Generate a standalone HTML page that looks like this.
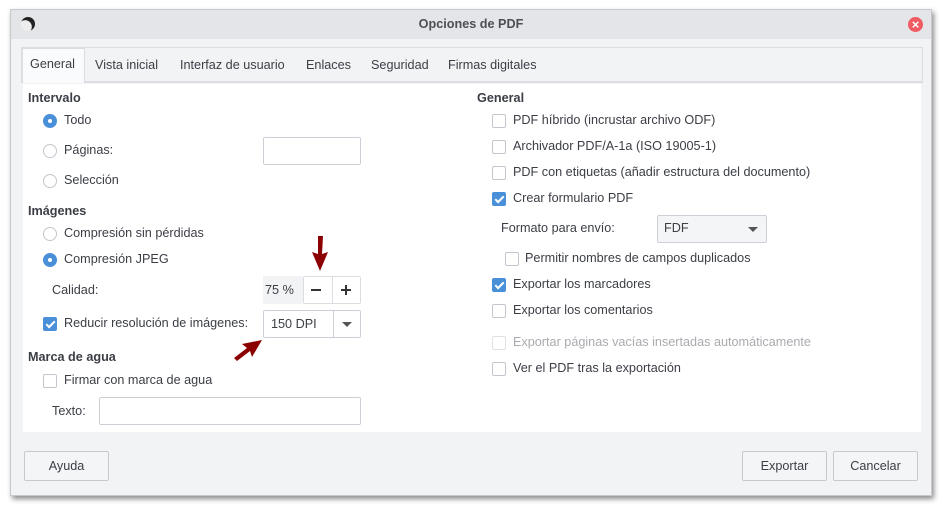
<!DOCTYPE html><html><head><meta charset="utf-8"><style>
*{box-sizing:border-box}body{margin:0;width:948px;height:512px;background:#fff;font-family:"Liberation Sans",sans-serif;font-size:12.65px;color:#3b3e45;position:relative;overflow:hidden}
.a{position:absolute;white-space:nowrap}
.win{position:absolute;left:10px;top:9px;width:922px;height:487px;background:#f2f3f5;border:1px solid #c8c9cc;box-shadow:2px 3px 5px rgba(0,0,0,.45)}
.tb{position:absolute;left:0;top:0;right:0;height:29px;background:#e4e5e8}
.rad{position:absolute;width:14px;height:14px;border-radius:50%;border:1px solid #c3c6cc;background:#fff}
.rad.on{background:#4a90d9;border-color:#4a90d9}.rad.on:after{content:"";position:absolute;left:4px;top:4px;width:4px;height:4px;border-radius:50%;background:#fff}
.chk{position:absolute;width:14px;height:14px;border-radius:2px;border:1px solid #c3c6cc;background:#fff}
.chk.on{background:#4a90d9;border-color:#4a90d9}
.chk.on:after{content:"";position:absolute;left:4px;top:1px;width:3px;height:7px;border:solid #fff;border-width:0 2px 2px 0;transform:rotate(45deg)}
.chk.dis{border-color:#e0e1e4}
.box{position:absolute;background:#fff;border:1px solid #ccd0d6;border-radius:2px}
.btn{position:absolute;background:#f4f5f7;border:1px solid #c6c9ce;border-radius:2px;text-align:center;line-height:28px}
.b{font-weight:bold}
.tri{position:absolute;width:0;height:0;border-left:5px solid transparent;border-right:5px solid transparent;border-top:5px solid #555}
</style></head><body>
<div class="win">
<div class="tb"></div>
<div class="a b" style="left:0;right:0;top:7px;text-align:center;color:#4c4f55">Opciones de PDF</div>
<div class="a" style="left:10px;top:7px;width:14px;height:14px;border-radius:50%;background:radial-gradient(circle at 30% 70%,#eee 45%,#222 50%)"></div>
<div class="a" style="left:897px;top:7px;width:15px;height:15px;border-radius:50%;background:#ef5a63;color:#fff;font-size:13px;line-height:15px;text-align:center;font-weight:bold">×</div>
<div class="a" style="left:10px;top:37px;width:902px;height:36px;border:1px solid #dcdde0;border-bottom:2px solid #dcdde0;background:#f2f3f5"></div>
<div class="a" style="left:11px;top:38px;width:63px;height:35px;background:#fafbfc;border:1px solid #dcdde0;border-bottom:none"></div>
<div class="a" style="left:19px;top:47px">General</div>
<div class="a" style="left:84px;top:48px">Vista inicial</div>
<div class="a" style="left:169px;top:48px">Interfaz de usuario</div>
<div class="a" style="left:295px;top:48px">Enlaces</div>
<div class="a" style="left:360px;top:48px">Seguridad</div>
<div class="a" style="left:437px;top:48px">Firmas digitales</div>
<div class="a" style="left:12px;top:74px;width:898px;height:348px;background:#fff"></div>
</div>
<div class="a b" style="left:28px;top:91px">Intervalo</div>
<div class="rad on" style="left:43px;top:114px"></div><div class="a" style="left:64px;top:113px">Todo</div>
<div class="rad" style="left:43px;top:144px"></div><div class="a" style="left:64px;top:143px">Páginas:</div>
<div class="box" style="left:263px;top:137px;width:98px;height:28px"></div>
<div class="rad" style="left:43px;top:174px"></div><div class="a" style="left:64px;top:173px">Selección</div>
<div class="a b" style="left:28px;top:204px">Imágenes</div>
<div class="rad" style="left:43px;top:227px"></div><div class="a" style="left:64px;top:226px">Compresión sin pérdidas</div>
<div class="rad on" style="left:43px;top:253px"></div><div class="a" style="left:64px;top:252px">Compresión JPEG</div>
<div class="a" style="left:52px;top:283px">Calidad:</div>
<div class="a" style="left:263px;top:276px;width:40px;height:28px;background:#f2f3f5;line-height:28px;padding-left:2px">75 %</div>
<div class="box" style="left:303px;top:276px;width:58px;height:28px;border-color:#dcdde2"></div>
<div class="a" style="left:332px;top:277px;width:1px;height:26px;background:#dcdde2"></div>
<div class="a" style="left:311px;top:289px;width:10px;height:2px;background:#333"></div>
<div class="a" style="left:341px;top:289px;width:10px;height:2px;background:#333"></div>
<div class="a" style="left:345px;top:285px;width:2px;height:10px;background:#333"></div>
<div class="chk on" style="left:43px;top:317px"></div><div class="a" style="left:64px;top:316px">Reducir resolución de imágenes:</div>
<div class="box" style="left:263px;top:310px;width:98px;height:28px"></div>
<div class="a" style="left:333px;top:311px;width:1px;height:26px;background:#ccd0d6"></div>
<div class="a" style="left:271px;top:317px">150 DPI</div>
<div class="tri" style="left:342px;top:322px"></div>
<div class="a b" style="left:28px;top:350px">Marca de agua</div>
<div class="chk" style="left:43px;top:374px"></div><div class="a" style="left:64px;top:373px">Firmar con marca de agua</div>
<div class="a" style="left:52px;top:404px">Texto:</div>
<div class="box" style="left:99px;top:397px;width:262px;height:28px"></div>
<svg class="a" style="left:0;top:0" width="948" height="512"><path d="M318 236 L323 236 L322 254 L328 252 L320 271 L312 252 L318 254 Z" fill="#8b0000"/><path d="M262 340 L242 344 L247 348 L234 358 L237 361 L250 351 L252 357 Z" fill="#8b0000"/></svg>
<div class="a b" style="left:477px;top:91px">General</div>
<div class="chk" style="left:492px;top:114px"></div><div class="a" style="left:513px;top:113px">PDF híbrido (incrustar archivo ODF)</div>
<div class="chk" style="left:492px;top:140px"></div><div class="a" style="left:513px;top:139px">Archivador PDF/A-1a (ISO 19005-1)</div>
<div class="chk" style="left:492px;top:166px"></div><div class="a" style="left:513px;top:165px">PDF con etiquetas (añadir estructura del documento)</div>
<div class="chk on" style="left:492px;top:192px"></div><div class="a" style="left:513px;top:191px">Crear formulario PDF</div>
<div class="a" style="left:501px;top:221px">Formato para envío:</div>
<div class="box" style="left:657px;top:215px;width:110px;height:28px;background:#f4f5f7"></div>
<div class="a" style="left:664px;top:221px">FDF</div>
<div class="tri" style="left:748px;top:227px"></div>
<div class="chk" style="left:505px;top:252px"></div><div class="a" style="left:525px;top:251px">Permitir nombres de campos duplicados</div>
<div class="chk on" style="left:492px;top:278px"></div><div class="a" style="left:513px;top:277px">Exportar los marcadores</div>
<div class="chk" style="left:492px;top:304px"></div><div class="a" style="left:513px;top:303px">Exportar los comentarios</div>
<div class="chk dis" style="left:492px;top:336px"></div><div class="a" style="left:513px;top:335px;color:#a9abaf">Exportar páginas vacías insertadas automáticamente</div>
<div class="chk" style="left:492px;top:362px"></div><div class="a" style="left:513px;top:361px">Ver el PDF tras la exportación</div>
<div class="btn" style="left:24px;top:451px;width:85px;height:30px">Ayuda</div>
<div class="btn" style="left:742px;top:451px;width:85px;height:30px">Exportar</div>
<div class="btn" style="left:833px;top:451px;width:85px;height:30px">Cancelar</div>
</body></html>
